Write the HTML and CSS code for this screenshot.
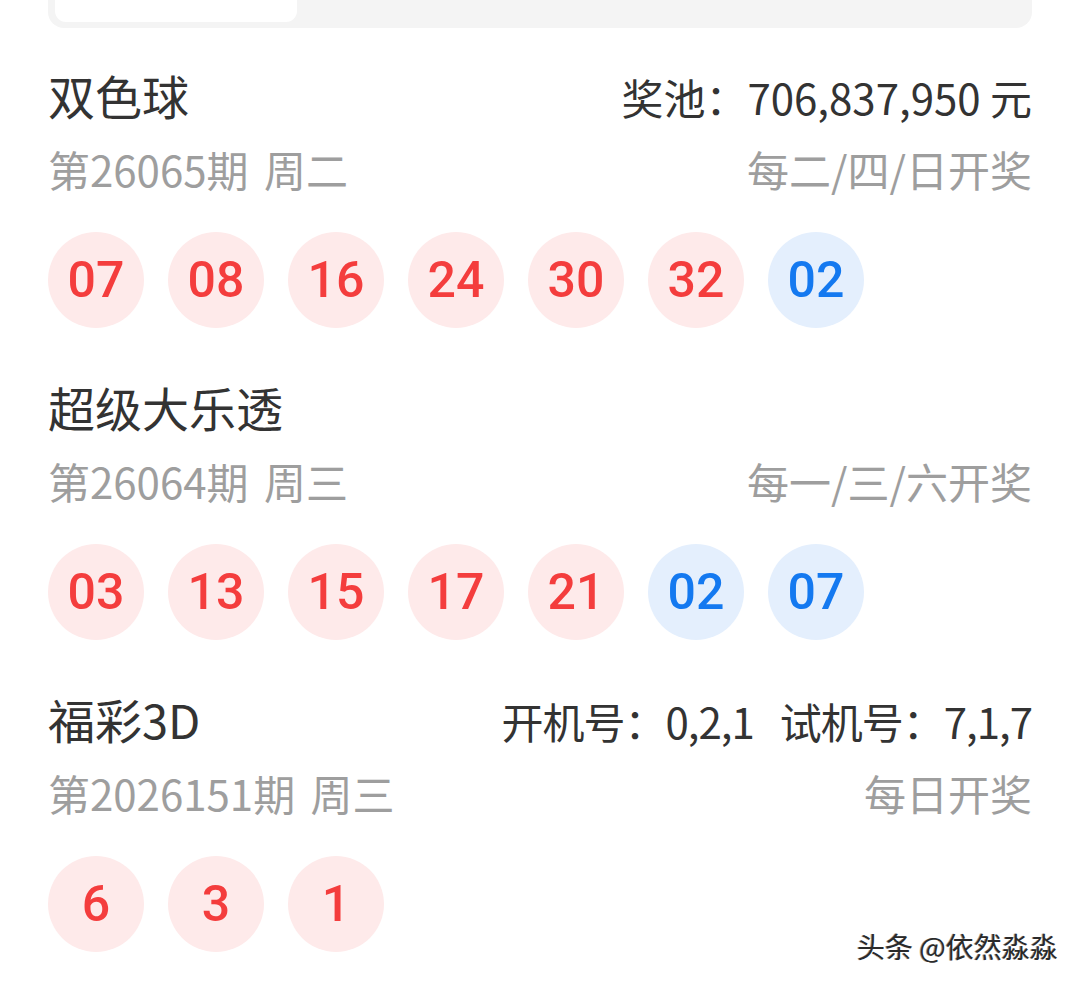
FILE: index.html
```html
<!DOCTYPE html>
<html lang="zh">
<head>
    <meta charset="UTF-8">
    <meta name="viewport" content="width=device-width, initial-scale=1.0">
    <title>开奖公告</title>
    <link rel="stylesheet" href="styles.css">
</head>
<body>

    <div class="page">
        <div class="tabs">
            <div class="tab active"></div>
        </div>

        <div class="lottery first">
            <div class="lottery-head">
                <h2>双色球</h2>
                <span class="extra">奖池：706,837,950 元</span>
            </div>
            <div class="lottery-sub">
                <span>第26065期 周二</span>
                <span>每二/四/日开奖</span>
            </div>
            <div class="balls">
                <span class="ball red">07</span>
                <span class="ball red">08</span>
                <span class="ball red">16</span>
                <span class="ball red">24</span>
                <span class="ball red">30</span>
                <span class="ball red">32</span>
                <span class="ball blue">02</span>
            </div>
        </div>

        <div class="lottery">
            <div class="lottery-head">
                <h2>超级大乐透</h2>
            </div>
            <div class="lottery-sub">
                <span>第26064期 周三</span>
                <span>每一/三/六开奖</span>
            </div>
            <div class="balls">
                <span class="ball red">03</span>
                <span class="ball red">13</span>
                <span class="ball red">15</span>
                <span class="ball red">17</span>
                <span class="ball red">21</span>
                <span class="ball blue">02</span>
                <span class="ball blue">07</span>
            </div>
        </div>

        <div class="lottery">
            <div class="lottery-head">
                <h2>福彩3D</h2>
                <span class="extra tight">开机号：0,2,1<span class="gap">试机号：7,1,7</span></span>
            </div>
            <div class="lottery-sub">
                <span>第2026151期 周三</span>
                <span>每日开奖</span>
            </div>
            <div class="balls">
                <span class="ball red">6</span>
                <span class="ball red">3</span>
                <span class="ball red">1</span>
            </div>
        </div>
    </div>

    <div class="watermark">头条 @依然淼淼</div>

</body>
</html>
```

FILE: styles.css
```css
body {
    margin: 0;
    background-color: #fff;
    font-family: "Noto Sans CJK SC", "Noto Sans", sans-serif;
    color: #333;
}

.page {
    padding: 0 48px;
}

/* 顶部分段选择（只露出下半截） */
.tabs {
    height: 28px;
    background-color: #f4f4f4;
    border-radius: 0 0 16px 16px;
    padding: 0 7px;
    box-sizing: border-box;
}

.tabs .tab {
    width: 242px;
    height: 22px;
    background-color: #fff;
    border-radius: 0 0 11px 11px;
}

.lottery {
    margin-top: 51px;
}

.lottery.first {
    margin-top: 39px;
}

.lottery-head {
    display: flex;
    justify-content: space-between;
    align-items: baseline;
    height: 56px;
}

.lottery-head h2 {
    margin: 0;
    font-size: 47px;
    font-weight: 400;
    line-height: 56px;
    color: #333;
}

.lottery-head .extra {
    font-size: 42px;
    line-height: 56px;
    color: #333;
}

.lottery-head .extra.tight {
    letter-spacing: -1px;
}

.lottery-head .gap {
    margin-left: 26px;
}

.lottery-sub {
    display: flex;
    justify-content: space-between;
    margin-top: 21px;
    font-size: 42px;
    line-height: 50px;
    color: #9e9e9e;
    word-spacing: 6px;
}

.balls {
    display: flex;
    gap: 24px;
    margin-top: 38px;
}

.ball {
    width: 96px;
    height: 96px;
    border-radius: 50%;
    display: flex;
    justify-content: center;
    align-items: center;
    font-family: Roboto, "Noto Sans", sans-serif;
    font-size: 50px;
    font-weight: 500;
}

.ball.red {
    background-color: #feeaea;
    color: #f43d3d;
}

.ball.blue {
    background-color: #e4effd;
    color: #1479f0;
}

.watermark {
    position: absolute;
    left: 857px;
    top: 926px;
    font-size: 28px;
    color: #2a2a2a;
    text-shadow: 1px 1px 0 #fff, -1px 0 0 #999;
}
```
